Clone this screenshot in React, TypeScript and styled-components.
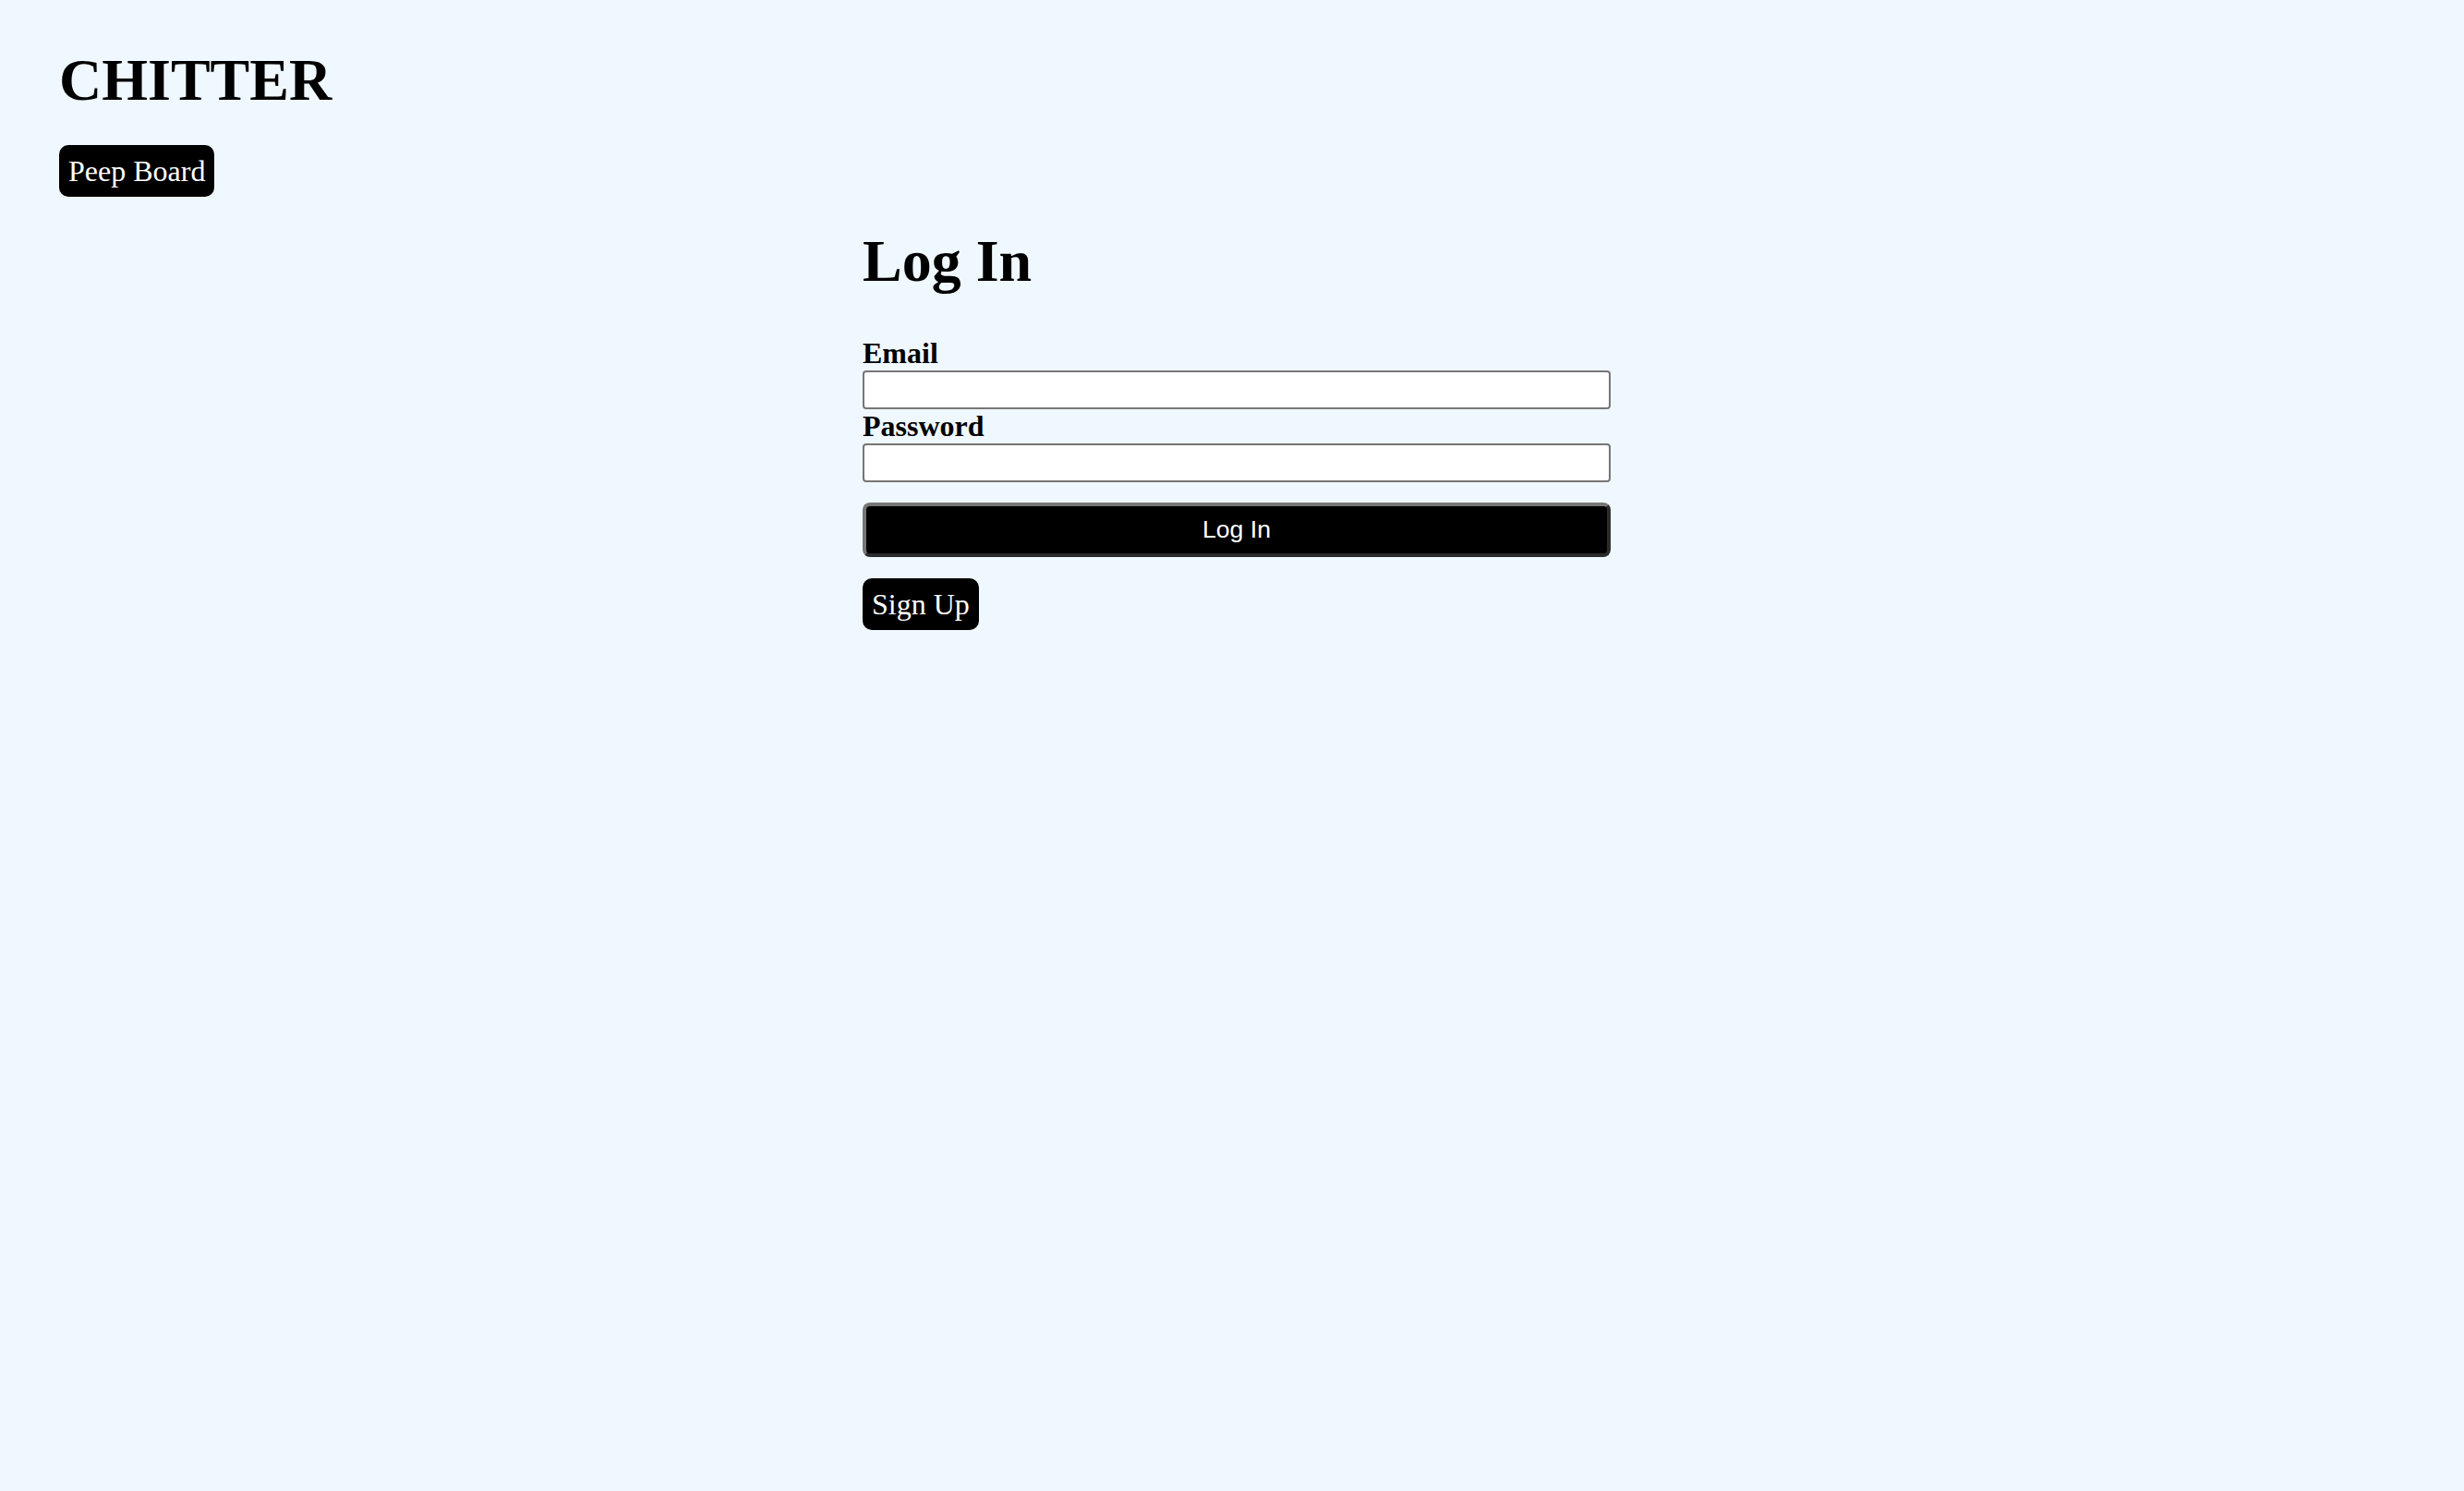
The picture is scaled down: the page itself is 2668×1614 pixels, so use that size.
import React from "react";
import styled, { createGlobalStyle } from "styled-components";

const GlobalStyle = createGlobalStyle`
  html, body {
    margin: 0;
    padding: 0;
    background: #f0f8ff;
  }
  body {
    font-family: "Liberation Serif", "Times New Roman", serif;
    color: #000;
    min-height: 1614px;
  }
`;

const Page = styled.div`
  min-height: 1614px;
  background: #f0f8ff;
`;

const Header = styled.header`
  display: flex;
  flex-direction: column;
  align-items: flex-start;
  padding: 50px 0 0 64px;
`;

const Title = styled.h1`
  margin: 0;
  font-family: "Liberation Serif", "Times New Roman", serif;
  font-size: 64px;
  font-weight: 700;
  line-height: 1.15;
`;

const NavLink = styled.a`
  display: inline-block;
  margin-top: ${(p: { $top?: number }) => p.$top ?? 0}px;
  padding: 10px;
  background: #000;
  color: #fff;
  border-radius: 10px;
  font-family: "Liberation Serif", "Times New Roman", serif;
  font-size: 32px;
  line-height: 1.15;
  text-decoration: none;
  cursor: pointer;
`;

const Main = styled.main`
  display: flex;
  justify-content: center;
  padding-left: 10px;
`;

const Column = styled.section`
  width: 810px;
  display: flex;
  flex-direction: column;
  align-items: flex-start;
  padding-top: 33px;
`;

const Heading = styled.h1`
  margin: 0 0 44px;
  font-family: "Liberation Serif", "Times New Roman", serif;
  font-size: 64px;
  font-weight: 700;
  line-height: 1.15;
`;

const Form = styled.form`
  width: 100%;
  display: flex;
  flex-direction: column;
`;

const Label = styled.label`
  display: block;
  font-family: "Liberation Serif", "Times New Roman", serif;
  font-size: 32px;
  font-weight: 700;
  line-height: 1.15;
`;

const Input = styled.input`
  box-sizing: border-box;
  width: 100%;
  height: 42px;
  margin: 0;
  padding: 2px 4px;
  border: 2px solid #767676;
  border-radius: 4px;
  background: #fff;
  font-size: 26px;
  font-family: "Liberation Sans", Arial, sans-serif;
`;

const SubmitButton = styled.button`
  box-sizing: border-box;
  width: 100%;
  height: 59px;
  margin-top: 22px;
  border-width: 4px;
  border-style: solid;
  border-color: #767676 #2b2b2b #2b2b2b #767676;
  border-radius: 8px;
  background: #000;
  color: #fff;
  font-family: "Liberation Sans", Arial, sans-serif;
  font-size: 26.67px;
  line-height: 1.15;
  padding: 0;
  cursor: pointer;
`;

export default function App() {
  return (
    <Page>
      <GlobalStyle />
      <Header>
        <Title>CHITTER</Title>
        <NavLink $top={33} href="#">
          Peep Board
        </NavLink>
      </Header>
      <Main>
        <Column>
          <Heading>Log In</Heading>
          <Form onSubmit={(e) => e.preventDefault()}>
            <Label htmlFor="email">Email</Label>
            <Input id="email" type="email" />
            <Label htmlFor="password">Password</Label>
            <Input id="password" type="password" />
            <SubmitButton type="submit">Log In</SubmitButton>
          </Form>
          <NavLink $top={23} href="#">
            Sign Up
          </NavLink>
        </Column>
      </Main>
    </Page>
  );
}
